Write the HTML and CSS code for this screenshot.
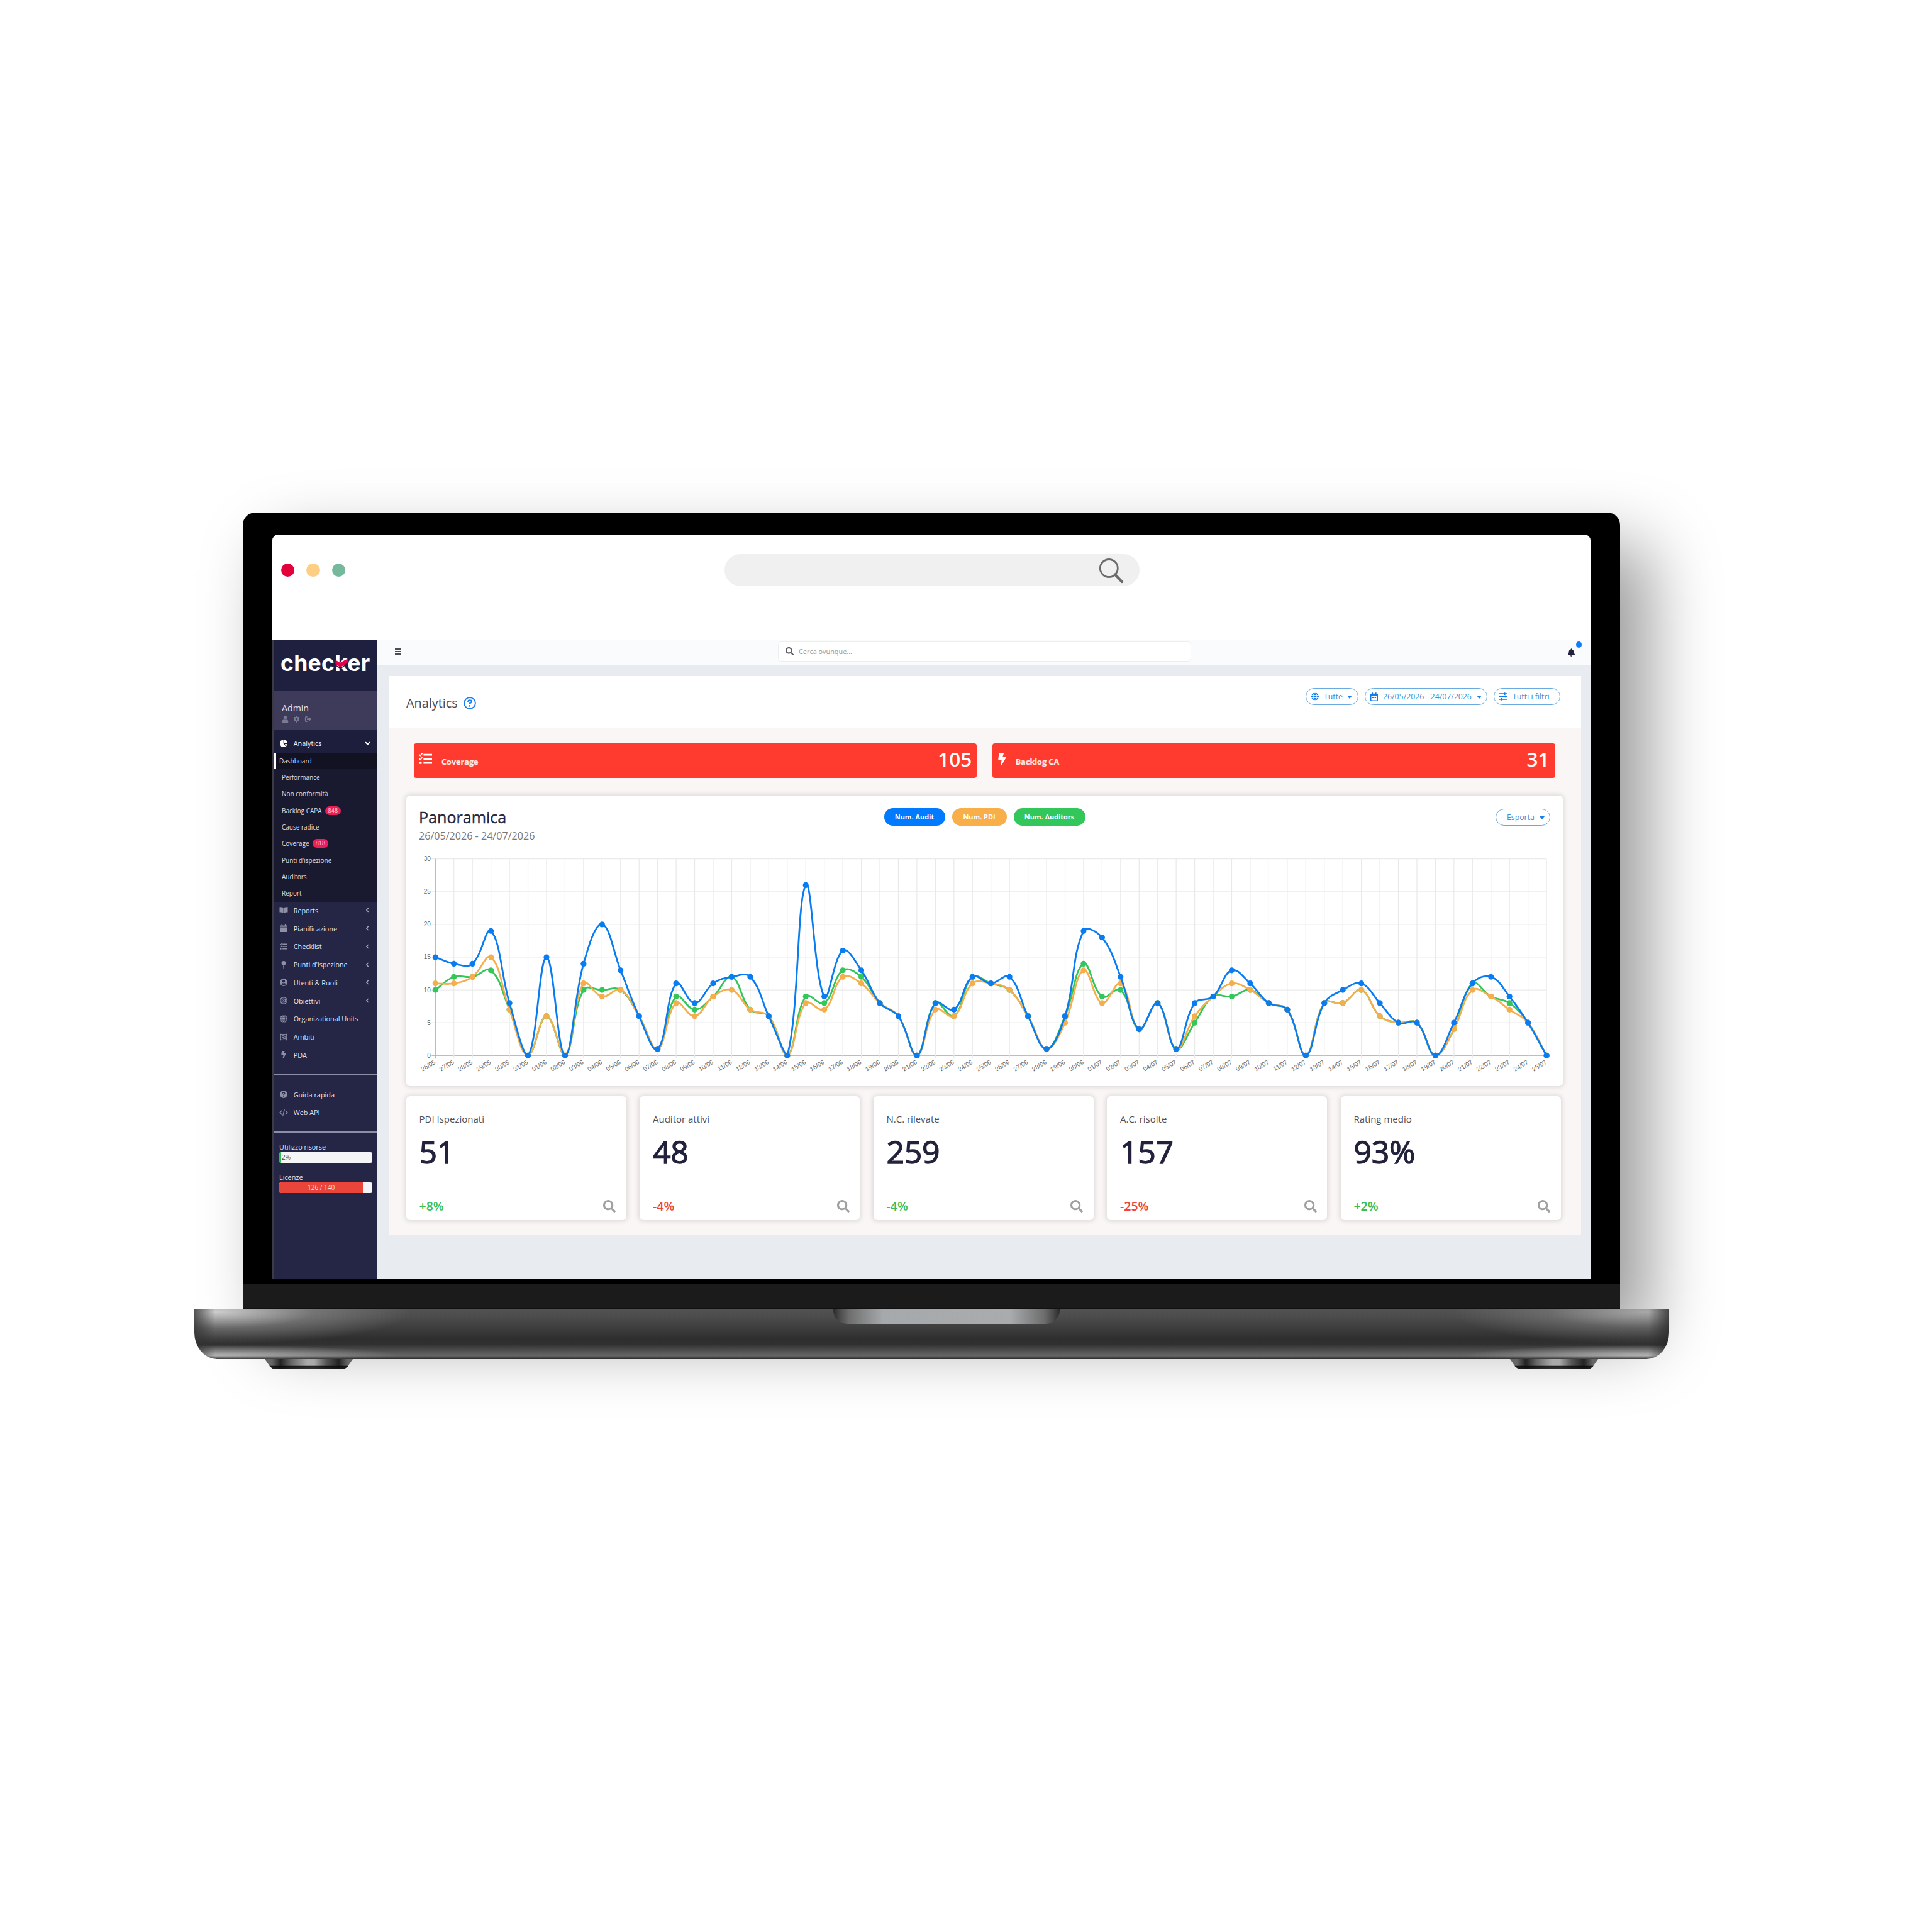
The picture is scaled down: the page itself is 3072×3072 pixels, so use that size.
FILE: index.html
```html
<!DOCTYPE html>
<html lang="it">
<head>
<meta charset="utf-8">
<title>Checker - Analytics</title>
<link rel="stylesheet" href="styles.css">
</head>
<body>
<svg class="sprite" aria-hidden="true">
  <symbol id="i-search" viewBox="0 0 512 512"><path d="M505 442.7L405.3 343c-4.5-4.5-10.6-7-17-7H372c27.6-35.3 44-79.7 44-128C416 93.1 322.9 0 208 0S0 93.1 0 208s93.1 208 208 208c48.3 0 92.7-16.4 128-44v16.3c0 6.4 2.5 12.5 7 17l99.7 99.7c9.4 9.4 24.6 9.4 33.9 0l28.3-28.3c9.4-9.4 9.4-24.6.1-34zM208 336c-70.7 0-128-57.2-128-128 0-70.7 57.2-128 128-128 70.7 0 128 57.2 128 128 0 70.7-57.2 128-128 128z"/></symbol>
  <symbol id="i-bell" viewBox="0 0 448 512"><path d="M224 512c35.32 0 63.97-28.65 63.97-64H160.03c0 35.35 28.65 64 63.97 64zm215.39-149.71c-19.32-20.76-55.47-51.99-55.47-154.29 0-77.7-54.48-139.9-127.94-155.16V32c0-17.67-14.32-32-31.98-32s-31.98 14.33-31.98 32v20.84C118.56 68.1 64.08 130.3 64.08 208c0 102.3-36.15 133.53-55.47 154.29-6 6.45-8.66 14.16-8.61 21.71.11 16.4 12.98 32 32.1 32h383.8c19.12 0 32-15.6 32.1-32 .05-7.55-2.61-15.27-8.61-21.71z"/></symbol>
  <symbol id="i-bolt" viewBox="0 0 320 512"><path d="M296 160H180.6l42.6-129.8C227.2 15 215.7 0 200 0H56C44 0 33.8 8.9 32.2 20.8l-32 240C-1.7 275.2 9.5 288 24 288h118.7L96.6 482.5c-3.6 15.2 8 29.5 23.3 29.5 8.4 0 16.4-4.4 20.8-12l176-304c9.3-15.9-2.2-36-20.7-36z"/></symbol>
  <symbol id="i-user" viewBox="0 0 448 512"><path d="M224 256c70.7 0 128-57.3 128-128S294.7 0 224 0 96 57.3 96 128s57.3 128 128 128zm89.6 32h-16.7c-22.2 10.2-46.9 16-72.9 16s-50.6-5.8-72.9-16h-16.7C60.2 288 0 348.2 0 422.4V464c0 26.5 21.5 48 48 48h352c26.5 0 48-21.5 48-48v-41.6c0-74.2-60.2-134.4-134.4-134.4z"/></symbol>
  <symbol id="i-gear" viewBox="0 0 16 16"><path fill-rule="evenodd" d="M6.5.5h3l.4 2 1.3.7 1.9-.7 1.5 2.6-1.5 1.4v3l1.5 1.4-1.5 2.6-1.9-.7-1.3.7-.4 2h-3l-.4-2-1.3-.7-1.9.7L1.400 10.900l1.500-1.400v-3L1.400 5.100l1.500-2.600 1.900.7 1.300-.7zM8 5.200a2.800 2.800 0 1 0 0 5.600 2.800 2.800 0 0 0 0-5.600z"/></symbol>
  <symbol id="i-logout" viewBox="0 0 16 16"><path d="M6 1.500v2.200H3.500q-.8 0-.8.800v7q0 .8.800.8H6v2.200H3.200Q.5 14.500.5 11.800V4.200q0-2.700 2.700-2.700zM9.500 2.500 16 8l-6.500 5.500V10H5V6h4.500z"/></symbol>
  <symbol id="i-pie" viewBox="0 0 16 16"><circle cx="8" cy="8" r="8"/><path fill="none" stroke="var(--cut)" stroke-width="1.500" d="M8.300 0v8.200l5.200 6M8.300 8.200 16 8.800"/></symbol>
  <symbol id="i-book" viewBox="0 0 18 16"><path d="M8.500 3v11.500C6.500 13 3.500 12.700.3 12.700V1.500C3.500 1.500 6.500 1.700 8.500 3zM9.500 3v11.500c2-1.500 5-1.800 8.200-1.800V1.500c-3.200 0-6.200.2-8.200 1.500z"/></symbol>
  <symbol id="i-cal" viewBox="0 0 16 16"><path d="M3.500 0h2v2h5V0h2v2H15v3H1V2h2.500zM1 6h14v10H1z"/></symbol>
  <symbol id="i-calo" viewBox="0 0 14 16"><path fill-rule="evenodd" d="M2.800 0h2v2h4.400V0h2v2H12q2 0 2 2v10q0 2-2 2H2q-2 0-2-2V4q0-2 2-2h.8zM1.700 6v7.600q0 .7.700.7h9.200q.7 0 .7-.7V6zM3.400 8.200h3v2h-3zM7.600 8.200h3v2h-3z"/></symbol>
  <symbol id="i-tasks" viewBox="0 0 20 18"><path d="M7 1.600h13v2.700H7zM7 7.700h13v2.700H7zM7 13.800h13v2.700H7zM.6 13.500h3.600v3.300H.6z"/><path d="M.6 2.800 2.200 4.300 5.400.6M.6 8.900l1.600 1.500 3.200-3.700" fill="none" stroke="currentColor" stroke-width="1.700"/></symbol>
  <symbol id="i-pin" viewBox="0 0 16 16"><circle cx="8" cy="4.600" r="4.600"/><path d="M6.900 9.800h2.200L8.600 16H7.400z"/></symbol>
  <symbol id="i-users" viewBox="0 0 16 16"><path fill-rule="evenodd" d="M8 0a8 8 0 1 1 0 16A8 8 0 0 1 8 0zm0 2.600a3 3 0 1 0 0 6 3 3 0 0 0 0-6zM3 11.700a6.200 6.200 0 0 0 10 0c-.6-1.400-2-2.100-3.300-2.100a5 5 0 0 1-3.400 0c-1.300 0-2.700.7-3.300 2.100z"/></symbol>
  <symbol id="i-target" viewBox="0 0 16 16"><g fill="none" stroke="currentColor" stroke-width="1.800"><circle cx="8" cy="8" r="7"/><circle cx="8" cy="8" r="3.700"/></g><circle cx="8" cy="8" r="1.500"/></symbol>
  <symbol id="i-globe" viewBox="0 0 16 16"><circle cx="8" cy="8" r="8"/><g fill="none" stroke="var(--cut)" stroke-width="1.100"><ellipse cx="8" cy="8" rx="3.600" ry="8"/><path d="M0 5.300h16M0 10.700h16"/></g></symbol>
  <symbol id="i-group" viewBox="0 0 18 16"><path fill="none" stroke="currentColor" stroke-width="1.500" d="M2 1.500h14v13H2zM5 4.500h5.500v4H5zM8 8.500v3h5.500v-5H11"/><path d="M0 0h3.500v3H0zM14.500 0H18v3h-3.500zM0 13h3.500v3H0zM14.500 13H18v3h-3.500z"/></symbol>
  <symbol id="i-help" viewBox="0 0 16 16"><circle cx="8" cy="8" r="8"/><path fill="none" stroke="var(--cut)" stroke-width="1.800" d="M5.500 6.200Q5.700 4 8 4t2.500 2Q10.500 7.300 8 8.400V9.600"/><circle cx="8" cy="12" r="1.200" fill="var(--cut)"/></symbol>
  <symbol id="i-helpo" viewBox="0 0 20 20"><circle cx="10" cy="10" r="8.900" fill="none" stroke="currentColor" stroke-width="1.900"/><path fill="none" stroke="currentColor" stroke-width="2.200" d="M7 7.900Q7.300 5.400 10 5.400t2.900 2.200Q12.900 9.100 10 10.300V12"/><circle cx="10" cy="14.400" r="1.350"/></symbol>
  <symbol id="i-code" viewBox="0 0 20 16"><path fill="none" stroke="currentColor" stroke-width="2" d="M6 3.500 1.500 8 6 12.500M14 3.500 18.500 8 14 12.500M11.800 1 8.200 15"/></symbol>
  <symbol id="i-sliders" viewBox="0 0 16 16"><path d="M0 1.600h16v2H0zM0 7h16v2H0zM0 12.400h16v2H0z"/><path d="M8.700.4h3v4.400h-3zM10.500 5.800h3v4.400h-3zM3 11.200h3v4.400H3z"/></symbol>
  <symbol id="i-left" viewBox="0 0 8 12"><path fill="none" stroke="currentColor" stroke-width="2.300" d="M6.500 1.500 2.200 6l4.300 4.500"/></symbol>
  <symbol id="i-down" viewBox="0 0 12 8"><path fill="none" stroke="currentColor" stroke-width="2.600" d="M1.500 1.500 6 6l4.500-4.500"/></symbol>
</svg>

<main class="stage">
<div class="laptop">
  <div class="lid">
    <div class="screen">
      <div class="browser">
        <div class="dots"><i class="red"></i><i class="amber"></i><i class="green"></i></div>
        <div class="url"><svg width="40" height="42" viewBox="0 0 40 42" stroke="#6b6b6b"><circle cx="16.300" cy="17.500" r="14" stroke-width="2.800"/><path d="M26 27.500 37 39" stroke-width="4.200" stroke-linecap="round"/></svg></div>
      </div>
      <div class="app">
        <aside class="side">
          <div class="logo"><span>chec<b>k</b>er</span><svg width="22" height="16" viewBox="0 0 22 16"><path d="M.5 2.500 7.800 6.800 20.500 0v5.800L8.300 14.200.5 9.200z" fill="#e6004e"/><path d="M-1 9.700 8.300 15.800 21.500 6.800" fill="none" stroke="#1f1f3f" stroke-width="1.400"/></svg></div>
          <div class="admin">
            <div>Admin</div>
            <p><svg width="11" height="11"><use href="#i-user"/></svg><svg width="11" height="11"><use href="#i-gear"/></svg><svg width="12" height="11"><use href="#i-logout"/></svg></p>
          </div>
          <nav>
            <a class="item open"><svg class="ic"><use href="#i-pie"/></svg>Analytics<svg class="chev" width="9" height="6"><use href="#i-down"/></svg></a>
            <div class="sub">
              <a class="on">Dashboard</a>
              <a>Performance</a>
              <a>Non conformità</a>
              <a>Backlog CAPA<em>848</em></a>
              <a>Cause radice</a>
              <a>Coverage<em>818</em></a>
              <a>Punti d'ispezione</a>
              <a>Auditors</a>
              <a>Report</a>
            </div>
            <a class="item"><svg class="ic wide"><use href="#i-book"/></svg>Reports<svg class="chev" width="6" height="8"><use href="#i-left"/></svg></a>
            <a class="item"><svg class="ic"><use href="#i-cal"/></svg>Pianificazione<svg class="chev" width="6" height="8"><use href="#i-left"/></svg></a>
            <a class="item"><svg class="ic"><use href="#i-tasks"/></svg>Checklist<svg class="chev" width="6" height="8"><use href="#i-left"/></svg></a>
            <a class="item"><svg class="ic"><use href="#i-pin"/></svg>Punti d'ispezione<svg class="chev" width="6" height="8"><use href="#i-left"/></svg></a>
            <a class="item"><svg class="ic"><use href="#i-users"/></svg>Utenti &amp; Ruoli<svg class="chev" width="6" height="8"><use href="#i-left"/></svg></a>
            <a class="item"><svg class="ic"><use href="#i-target"/></svg>Obiettivi<svg class="chev" width="6" height="8"><use href="#i-left"/></svg></a>
            <a class="item"><svg class="ic"><use href="#i-globe"/></svg>Organizational Units</a>
            <a class="item"><svg class="ic"><use href="#i-group"/></svg>Ambiti</a>
            <a class="item"><svg class="ic"><use href="#i-bolt"/></svg>PDA</a>
          </nav>
          <nav class="extra">
            <a class="item"><svg class="ic"><use href="#i-help"/></svg>Guida rapida</a>
            <a class="item"><svg class="ic wide"><use href="#i-code"/></svg>Web API</a>
          </nav>
          <div class="usage">
            <label>Utilizzo risorse</label>
            <div class="meter"><i class="ok" style="width:2%"></i><span>2%</span></div>
            <label>Licenze</label>
            <div class="meter"><i class="full" style="width:90%">126 / 140</i></div>
          </div>
        </aside>

        <section class="main">
          <header class="topbar">
            <div class="burger"><i></i><i></i><i></i></div>
            <div class="find"><svg width="13" height="13"><use href="#i-search"/></svg>Cerca ovunque...</div>
            <div class="bell"><svg width="11" height="13"><use href="#i-bell"/></svg><i></i></div>
          </header>
          <div class="page">
            <div class="head">
              <h1>Analytics</h1><svg class="q" width="20" height="20"><use href="#i-helpo"/></svg>
              <div class="filters">
                <span class="btn" style="width:84px"><svg width="12" height="13"><use href="#i-globe"/></svg>Tutte<i></i></span>
                <span class="btn" style="width:195px"><svg width="12" height="14"><use href="#i-calo"/></svg>26/05/2026 - 24/07/2026<i></i></span>
                <span class="btn" style="width:106px"><svg width="13" height="13"><use href="#i-sliders"/></svg>Tutti i filtri</span>
              </div>
            </div>
            <div class="alerts">
              <div class="alert"><svg width="21" height="19"><use href="#i-tasks"/></svg><span>Coverage</span><strong>105</strong></div>
              <div class="alert second"><svg width="13" height="20"><use href="#i-bolt"/></svg><span>Backlog CA</span><strong>31</strong></div>
            </div>
            <div class="card overview">
              <div class="ohead">
                <div class="ttl"><h2>Panoramica</h2><p>26/05/2026 - 24/07/2026</p></div>
                <div class="pills"><b class="p1">Num. Audit</b><b class="p2">Num. PDI</b><b class="p3">Num. Auditors</b></div>
                <span class="btn export">Esporta<i></i></span>
              </div>
              <svg id="chart" width="1839" height="366"></svg>
            </div>
            <div class="stats">
              <div class="card stat"><h3>PDI Ispezionati</h3><strong>51</strong><footer><span class="up">+8%</span><svg width="20" height="20"><use href="#i-search"/></svg></footer></div>
              <div class="card stat"><h3>Auditor attivi</h3><strong>48</strong><footer><span class="down">-4%</span><svg width="20" height="20"><use href="#i-search"/></svg></footer></div>
              <div class="card stat"><h3>N.C. rilevate</h3><strong>259</strong><footer><span class="up">-4%</span><svg width="20" height="20"><use href="#i-search"/></svg></footer></div>
              <div class="card stat"><h3>A.C. risolte</h3><strong>157</strong><footer><span class="down">-25%</span><svg width="20" height="20"><use href="#i-search"/></svg></footer></div>
              <div class="card stat"><h3>Rating medio</h3><strong>93%</strong><footer><span class="up">+2%</span><svg width="20" height="20"><use href="#i-search"/></svg></footer></div>
            </div>
          </div>
        </section>
      </div>
    </div>
    <div class="chin"></div>
  </div>
  <div class="base"><div class="notch"></div></div>
  <div class="feet"><i></i><i></i></div>
</div>
</main>
<script src="chart.js"></script>
</body>
</html>
```
FILE: styles.css
```css
*{box-sizing:border-box}
body{margin:0;background:#fff;font-family:"Open Sans","Noto Sans",sans-serif;color:#4a4a55}
h1,h2,h3,p{margin:0;font-weight:400}
i,em{font-style:normal}
svg{display:block;fill:currentColor;flex:none}
.sprite{position:absolute;width:0;height:0}

/* laptop */
.stage{height:3072px;padding:815px 0 0 309px;overflow:hidden}
.laptop{width:2345px}
.lid{width:2190px;height:1267px;margin-left:77px;padding:35px 47px 0;background:#000;border-radius:20px 20px 0 0;box-shadow:46px 52px 110px rgba(0,0,0,.4);display:flex;flex-direction:column}
.screen{height:1183px;flex:none;background:#fff;border-radius:9px 9px 0 0;overflow:hidden;display:flex;flex-direction:column}
.chin{margin:9px -47px 0;flex:1;background:#1b1b1b;border-bottom:2px solid #111}
.base{height:79px;border-radius:0 0 36px 36px/0 0 42px 42px;overflow:hidden;display:flex;justify-content:center;
 background:
  linear-gradient(90deg,rgba(50,50,50,.75),rgba(60,60,60,0) 1.4%,rgba(60,60,60,0) 98.600%,rgba(40,40,40,.75)),
  linear-gradient(rgba(0,0,0,0) 93%,rgba(20,20,20,.6) 100%),
  radial-gradient(310px 52px at 35px 4px,rgba(235,235,235,.8),rgba(200,200,200,.3) 50%,rgba(200,200,200,0)),
  radial-gradient(310px 52px at 2310px 4px,rgba(215,215,215,.65),rgba(190,190,190,.25) 50%,rgba(190,190,190,0)),
  radial-gradient(290px 16px at 35px 73px,rgba(230,230,230,.6),rgba(200,200,200,0)),
  radial-gradient(290px 16px at 2310px 73px,rgba(230,230,230,.6),rgba(200,200,200,0)),
  linear-gradient(#525252,#4c4c4c 15%,#2e2e2e 60%,#303030 70%,#5a5a5a 88%,#666 94%,#555)}
.notch{width:360px;height:23px;margin-left:46px;border-radius:0 0 22px 22px;background:linear-gradient(90deg,#2a2a2a,#4c4c4c 3%,#6e6e6e 7%,#a6a9ab 22%,#a9abad 78%,#6e6e6e 93%,#4c4c4c 97%,#2a2a2a)}
.feet{display:flex;justify-content:space-between;padding:0 113px 0 112px}
.feet i{width:140px;height:16px;clip-path:polygon(0 0,100% 0,94% 75%,90% 100%,10% 100%,6% 75%);background:linear-gradient(transparent 64%,rgba(10,10,10,.85) 70%,rgba(20,20,20,.8) 94%,#777),linear-gradient(90deg,#666,#666 8%,#222 18%,#666 30%,#aaa 48%,#aaa 56%,#555 70%,#222 84%,#666 94%)}

/* browser frame */
.browser{height:168px;flex:none;display:flex;padding:31px 0 0 14px}
.dots{display:flex;gap:19px;padding-top:15px;width:705px}
.dots i{width:21.300px;height:21.300px;border-radius:50%}
.red{background:#e3003b}.amber{background:#fdcf84}.green{background:#75b89b}
.url{width:660px;height:51px;border-radius:26px;background:#f0f0f0;display:flex;justify-content:flex-end;padding:5px 25px 0 0}
.url svg{fill:none}

.app{flex:1;display:flex}

/* sidebar */
.side{width:167px;flex:none;border-left:2px solid #3c3a44;background:#252545;color:#e4e4ee;--cut:#252545}
.logo{height:80px;background:#1f1f3f;padding:17px 0 0 11px;position:relative;color:#fff}
.logo span{display:block;font:700 35.500px/40px Inter,sans-serif;letter-spacing:.3px}
.logo b{font-weight:700}
.logo svg{position:absolute;left:98px;top:28.500px}
.admin{height:62px;background:#3d3a5a;padding:17.500px 0 0 13px;font-size:14.200px;line-height:20px}
.admin p{display:flex;gap:7px;margin-top:2.500px;color:#7b7a92;height:11px;line-height:11px}
.item{display:flex;align-items:center;height:28.750px;font-size:10.850px;padding-left:9.500px}
.item.open{height:37px;padding-top:6px;background:#1d1d3c;color:#f2f2f6;--cut:#1d1d3c}
.item.open .ic{color:#fff}
.ic{width:12px;height:12px;margin:0 10.200px 0 0;color:#8f8fa8}
.ic.wide{width:14px;margin:0 9.200px 0 -1px}
.chev{margin:0 13px 0 auto;color:#aaaabd}
.open .chev{margin-right:11px;color:#fff}
.sub{background:#19192f;margin-bottom:-1px}
.sub a{display:flex;align-items:center;height:26.330px;padding:0 0 1px 13px;font-size:10px;color:#dcdce4}
.sub .on{background:#121222;border-left:4px solid #fff;padding-left:5px}
.sub em{margin-left:5px;width:25.500px;height:14px;border-radius:8px;background:#ea1e5a;color:#ffd3df;font-size:9px;line-height:14px;text-align:center}
.extra{margin-top:16px;border-top:2px solid #8d8da3;border-bottom:2px solid #8d8da3;padding:16px 0}
.usage{padding:14.500px 8px 0 9px;font-size:10.850px}
.usage label{display:block;line-height:16px;height:16px}
.meter{display:flex;height:17px;background:#f5f5f8;border-radius:3px;overflow:hidden;font-size:10px;line-height:16px;margin-bottom:15px}
.meter span{color:#444;padding-left:1px}
.ok{background:#28c050;min-width:3px}
.full{background:#e9453a;color:#fbdcd8;text-align:center}

/* main area */
.main{flex:1;background:#e8ebf0;display:flex;flex-direction:column;min-width:0}
.topbar{height:39px;background:#f9fbfd;display:flex;align-items:flex-start}
.burger{width:10.500px;margin:13px 0 0 27.500px;display:flex;flex-direction:column;gap:2px}
.burger i{height:2px;background:#4d4d58}
.find{width:657px;height:32px;margin:2px 0 0 599px;border:1px solid #eceff2;border-radius:6px;background:#fff;display:flex;align-items:center;padding:0 0 1px 11px;font-size:10.900px;color:#999}
.find svg{color:#5c5c66;margin-right:8px}
.bell{display:flex;margin-left:598.500px;color:#22223d;padding-top:12.500px}
.bell i{width:8.600px;height:10px;border-radius:50%;background:#0a7cff;margin:-11px 0 0 2.500px}
.page{width:1896px;height:889px;margin:18px 0 0 18px;background:#faf6f5}
.head{height:82px;background:#fff;display:flex;padding-left:28px}
h1{font-size:19.850px;line-height:28px;margin-top:29px}
.q{margin:33px 0 0 9.500px;color:#1680f0}
.filters{display:flex;gap:10px;margin:19px 33.500px 0 auto}
.btn{display:flex;align-items:center;height:27px;border:1.500px solid #6aaae0;border-radius:14px;padding-left:8px;font-size:12.300px;color:#3f8fd6;--cut:#fff;white-space:nowrap}
.btn svg{margin-right:8.500px;color:#0f7bf0}
.btn i{margin:1px 0 0 auto;border:4px solid transparent;border-top:5px solid #1a7fe6;border-bottom:0}
.filters .btn i{margin-right:8.500px}
.filters .btn:nth-child(2) i{margin-right:7.500px}
.alerts{display:flex;gap:24.500px;padding:25px 41px 0 40px}
.alert{flex:1;height:54.500px;border-radius:4px;background:#ff3b30;color:#fff;display:flex;align-items:center;padding:0 9.500px 0 8px}
.alert svg{margin:-5px 15px 0 0}
.alert.second svg{margin:-5px 15px 0 1px}
.alert span{font-size:12.650px;font-weight:700;padding-top:2.500px;color:#ffe9e6;-webkit-text-stroke:.2px}
.alert strong{margin-left:auto;font-size:31.500px;font-weight:600;line-height:50px;padding-bottom:4px}
.alert:first-child strong{margin-right:-1.500px}
.card{background:#fff;border-radius:6px;box-shadow:0 0 7px 2px rgba(50,50,50,.14)}
.overview{width:1839px;height:461.500px;margin:28.500px 0 0 28px}
.ohead{display:flex;height:95px;padding:0 20px}
.ttl{width:740px}
h2{font-size:25.100px;line-height:34px;margin-top:17px;color:#26263f;-webkit-text-stroke:.4px #26263f}
.ttl p{font-size:16.100px;line-height:22px;margin-top:2px;color:#777}
.pills{display:flex;gap:11px;padding-top:20px;margin-left:-.5px}
.pills b{height:28px;border-radius:14px;color:#fff;font-size:10.900px;line-height:28px;text-align:center}
.p1{width:97px;background:#007bff}.p2{width:87px;background:#f8ae49}.p3{width:114px;background:#33c65a}
.export{width:87px;margin:21px 0 0 auto;padding:0 8px 0 17px}
.stats{display:grid;grid-template-columns:repeat(5,349.600px);gap:21.900px;margin:16px 0 0 28px}
.stat{height:197.500px;padding:25px 16.500px 0 20.500px;display:flex;flex-direction:column}
h3{font-size:15px;line-height:22px;color:#50505a}
.stat strong{font-size:50px;font-weight:400;-webkit-text-stroke:1.300px #22223c;color:#22223c;line-height:60px;margin-top:11px;letter-spacing:-.3px}
.stat footer{display:flex;justify-content:space-between;align-items:center;margin-top:45px;height:24px;font-size:19.500px;font-weight:600;line-height:24px}
.stat footer svg{color:#a0a0a0}
.up{color:#36c05c}.down{color:#f0443a}
```
FILE: chart.js
```javascript
const audit = [15,14,14,19,8,0,15,0,14,20,13,6,1,11,8,11,12,12,6,0,26,9,16,13,8,6,0,8,7,12,11,12,6,1,6,19,18,12,4,8,1,8,9,13,11,8,7,0,8,10,11,8,5,5,0,5,11,12,9,5,0];
const pdi = [11,11,12,15,7,0,6,0,11,9,10,6,1,8,6,9,10,7,6,0,8,7,12,11,8,6,0,7,6,11,11,10,6,1,5,13,8,11,4,8,1,6,9,11,10,8,7,0,8,8,10,6,5,5,0,4,10,9,7,5,0];
const auditors = [10,12,12,13,7,0,6,0,10,10,10,6,1,9,7,9,12,7,6,0,9,8,13,12,8,6,0,8,6,12,11,10,6,1,6,14,9,10,4,8,1,5,9,9,10,8,7,0,8,8,10,6,5,5,0,4,11,9,8,5,0];

const left = 46.3, right = 1813.1, top0 = 5.7, bottom = 318.3;
const X = i => left + (right - left) * i / 60;
const Y = v => bottom - (bottom - top0) * v / 30;
const clampY = y => Math.max(top0, Math.min(bottom, y));
const out = [];

for (let v = 0; v <= 30; v += 5) {
  out.push(`<path d="M${left - 6} ${Y(v)}H${right}" stroke="${v ? '#ebebeb' : '#bdbdbd'}" stroke-width="1.2"/>`);
  out.push(`<text x="${left - 7.5}" y="${Y(v) + 3.4}" text-anchor="end">${v}</text>`);
}
const day = new Date(2026, 4, 26);
const two = n => String(n).padStart(2, '0');
for (let i = 0; i <= 60; i++) {
  out.push(`<path d="M${X(i)} ${top0}V${bottom + 5}" stroke="${i ? '#e9e9e9' : '#b5b5b5'}" stroke-width="1.2"/>`);
  out.push(`<text transform="translate(${X(i) + 1} ${bottom + 12.5}) rotate(-31)" text-anchor="end">${two(day.getDate())}/${two(day.getMonth() + 1)}</text>`);
  day.setDate(day.getDate() + 1);
}

/* smooth line, tension 0.4, handles kept inside the plot area */
function line(values, color) {
  const p = values.map((v, i) => [X(i), Y(v)]);
  const handles = p.map((c, i) => {
    const a = p[i - 1] || c, b = p[i + 1] || c;
    const d1 = Math.hypot(c[0] - a[0], c[1] - a[1]), d2 = Math.hypot(b[0] - c[0], b[1] - c[1]);
    const f1 = 0.4 * d1 / (d1 + d2), f2 = 0.4 * d2 / (d1 + d2);
    return [
      [c[0] - f1 * (b[0] - a[0]), clampY(c[1] - f1 * (b[1] - a[1]))],
      [c[0] + f2 * (b[0] - a[0]), clampY(c[1] + f2 * (b[1] - a[1]))]
    ];
  });
  let d = `M${p[0]}`;
  for (let i = 1; i < p.length; i++) d += `C${handles[i - 1][1]} ${handles[i][0]} ${p[i]}`;
  out.push(`<path d="${d}" fill="none" stroke="${color}" stroke-width="2.8"/>`);
  p.forEach(c => out.push(`<circle cx="${c[0]}" cy="${c[1]}" r="4.6" fill="${color}"/>`));
}
line(auditors, '#33c65a');
line(pdi, '#f5ae4b');
line(audit, '#0a7cf2');

document.getElementById('chart').innerHTML =
  `<g font-family="Liberation Sans, Arial, sans-serif" font-size="10" fill="#666">${out.join('')}</g>`;
```
